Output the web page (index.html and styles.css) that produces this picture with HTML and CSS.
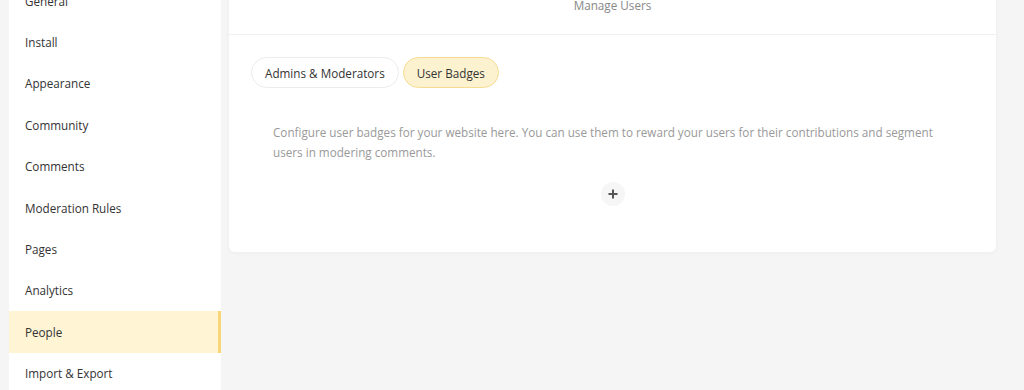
FILE: index.html
```html
<!DOCTYPE html>
<html lang="en">
<head>
<meta charset="utf-8">
<title>Manage Users</title>
<link rel="stylesheet" href="styles.css">
</head>
<body>
<div class="layout">
  <nav class="sidebar">
    <a class="nav-item">General</a>
    <a class="nav-item">Install</a>
    <a class="nav-item">Appearance</a>
    <a class="nav-item">Community</a>
    <a class="nav-item">Comments</a>
    <a class="nav-item">Moderation Rules</a>
    <a class="nav-item">Pages</a>
    <a class="nav-item">Analytics</a>
    <a class="nav-item active">People</a>
    <a class="nav-item">Import &amp; Export</a>
  </nav>
  <main class="main">
    <section class="card">
      <header class="card-header">Manage Users</header>
      <div class="card-body">
        <div class="tabs">
          <button class="tab">Admins &amp; Moderators</button>
          <button class="tab active">User Badges</button>
        </div>
        <p class="desc">Configure user badges for your website here. You can use them to reward your users for their contributions and segment users in modering comments.</p>
        <div class="add-row">
          <button class="add-btn" aria-label="Add badge">
            <svg width="10" height="10" viewBox="0 0 10 10"><path d="M5 0.5V9.5M0.5 5H9.5" stroke="#555" stroke-width="2" fill="none"/></svg>
          </button>
        </div>
      </div>
    </section>
  </main>
</div>
</body>
</html>
```
FILE: styles.css
```css
html, body {
  margin: 0;
  padding: 0;
  background: #f5f5f5;
  font-family: "Open Sans", "Noto Sans", sans-serif;
  font-size: 11.7px;
  color: #333;
  height: 390px;
  overflow: hidden;
}

.layout {
  display: flex;
  gap: 8px;
  padding-left: 9px;
  padding-right: 28px;
  margin-top: -20px;
}

.sidebar {
  width: 212px;
  flex: none;
  background: #fff;
  display: flex;
  flex-direction: column;
  padding-bottom: 40px;
}

.nav-item {
  display: flex;
  align-items: center;
  height: 41.4px;
  padding-left: 16px;
  color: #333;
  box-sizing: border-box;
}

.nav-item.active {
  background: #fff4d4;
  border-right: 3px solid #f7d67a;
}

.main {
  flex: 1;
}

.card {
  background: #fff;
  border-radius: 0 0 6px 6px;
  box-shadow: 0 1px 4px rgba(0, 0, 0, 0.04);
}

.card-header {
  text-align: center;
  color: #888;
  padding-top: 16px;
  height: 55px;
  box-sizing: border-box;
  line-height: 18px;
  border-bottom: 1px solid #f0f0f0;
}

.card-body {
  padding: 22px 22px 46px;
}

.tabs {
  display: flex;
  gap: 4px;
}

.tab {
  font: inherit;
  color: #333;
  background: #fff;
  border: 1px solid #ececec;
  border-radius: 16px;
  height: 31px;
  padding: 0 13px;
  cursor: pointer;
}

.tab.active {
  background: #fdf2d0;
  border-color: #f5dc92;
}

.desc {
  margin: 34px 38px 0 22px;
  color: #999;
  line-height: 20px;
}

.add-row {
  display: flex;
  justify-content: center;
  margin-top: 20px;
}

.add-btn {
  width: 24px;
  height: 24px;
  border-radius: 50%;
  border: none;
  background: #f6f6f6;
  display: flex;
  align-items: center;
  justify-content: center;
  padding: 0;
}
```
